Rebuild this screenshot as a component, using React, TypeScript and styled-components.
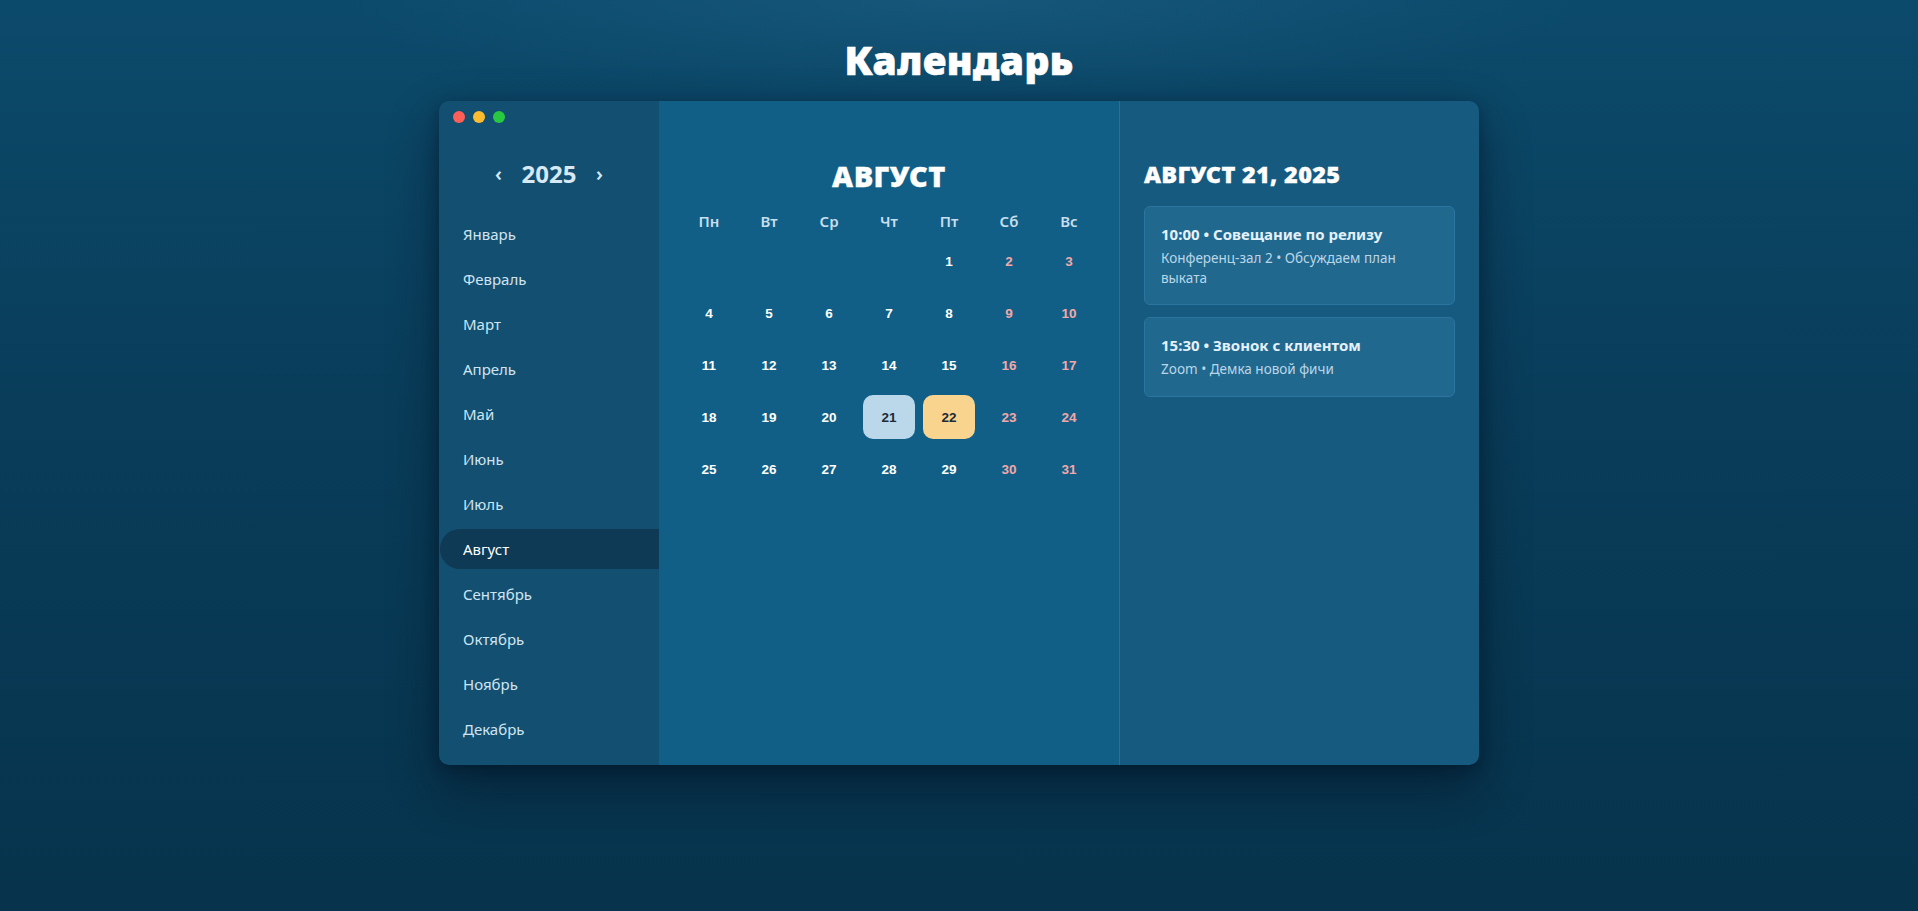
import React from "react";
import styled, { createGlobalStyle } from "styled-components";

const GlobalStyle = createGlobalStyle`
  html, body { margin: 0; padding: 0; }
  body {
    min-height: 911px;
    font-family: "Noto Sans", "Open Sans", sans-serif;
    background:
      radial-gradient(ellipse 900px 140px at 50% 0%, rgba(40, 110, 150, 0.35), rgba(0,0,0,0) 70%),
      linear-gradient(180deg, #0c4a6b 0%, #093d5a 45%, #07334c 100%);
    background-attachment: fixed;
  }
`;

const Page = styled.div`
  min-height: 911px;
  padding-top: 37px;
  box-sizing: border-box;
  display: flex;
  flex-direction: column;
  align-items: center;
`;

const Title = styled.h1`
  margin: 0 0 18px;
  font-size: 39px;
  line-height: 46px;
  font-weight: 900;
  color: #ffffff;
  letter-spacing: 0.4px;
  -webkit-text-stroke: 0.6px #ffffff;
`;

const Window = styled.div`
  width: 1040px;
  display: flex;
  border-radius: 10px;
  overflow: hidden;
  box-shadow: 0 22px 50px rgba(0, 10, 25, 0.45), 0 4px 14px rgba(0, 10, 25, 0.3);
`;

const Sidebar = styled.aside`
  width: 220px;
  flex: 0 0 220px;
  background: #134f71;
  padding: 10px 0 16px;
  box-sizing: border-box;
  display: flex;
  flex-direction: column;
`;

const Dots = styled.div`
  display: flex;
  gap: 8px;
  padding-left: 14px;
  margin-bottom: 35px;
`;

const Dot = styled.span<{ $color: string }>`
  width: 12px;
  height: 12px;
  border-radius: 50%;
  background: ${(p) => p.$color};
`;

const YearRow = styled.div`
  height: 32px;
  display: flex;
  align-items: center;
  justify-content: center;
  gap: 12px;
  margin-bottom: 24px;
  color: #d6e9f5;
`;

const Chevron = styled.button`
  background: none;
  border: none;
  padding: 0 2px;
  color: #d6e9f5;
  font-family: "Noto Sans", sans-serif;
  font-size: 20px;
  font-weight: 600;
  line-height: 32px;
  cursor: pointer;
`;

const Year = styled.span`
  font-size: 24px;
  font-weight: 700;
  line-height: 32px;
  width: 66px;
  text-align: center;
`;

const MonthList = styled.ul`
  list-style: none;
  margin: 0;
  padding: 0 0 0 1px;
  display: flex;
  flex-direction: column;
  gap: 5px;
`;

const MonthItem = styled.li<{ $active?: boolean }>`
  height: 40px;
  display: flex;
  align-items: center;
  padding-left: 23px;
  font-size: 15px;
  color: ${(p) => (p.$active ? "#ffffff" : "#cfe5f2")};
  background: ${(p) => (p.$active ? "#0f3a56" : "transparent")};
  border-radius: 20px 0 0 20px;
`;

const Main = styled.section`
  width: 460px;
  flex: 0 0 460px;
  background: #115f87;
  padding: 58px 20px 20px;
  box-sizing: border-box;
  display: flex;
  flex-direction: column;
  align-items: center;
`;

const MonthTitle = styled.h2`
  margin: 0 0 18px;
  font-size: 29px;
  line-height: 34px;
  font-weight: 900;
  color: #ffffff;
  text-transform: uppercase;
  letter-spacing: 0.5px;
  -webkit-text-stroke: 0.3px #ffffff;
`;

const Grid = styled.div`
  display: grid;
  grid-template-columns: repeat(7, 52px);
  column-gap: 8px;
  row-gap: 8px;
  grid-auto-rows: 44px;
  grid-template-rows: 20px;
`;

const WeekDay = styled.div`
  text-align: center;
  font-size: 15px;
  line-height: 20px;
  font-weight: 600;
  color: #c6deed;
`;

const Day = styled.button<{ $weekend?: boolean; $variant?: "selected" | "today" }>`
  border: none;
  border-radius: 10px;
  font-family: "Liberation Sans", Arial, sans-serif;
  font-size: 13.5px;
  font-weight: 700;
  padding: 0;
  cursor: pointer;
  color: ${(p) =>
    p.$variant ? "#1d2b36" : p.$weekend ? "#f2a8a8" : "#ffffff"};
  background: ${(p) =>
    p.$variant === "selected"
      ? "#bad8ea"
      : p.$variant === "today"
      ? "#f8d48f"
      : "transparent"};
`;

const Empty = styled.div``;

const Details = styled.section`
  flex: 1;
  background: #175a7f;
  border-left: 1px solid #2c6f95;
  padding: 60px 24px 24px;
  box-sizing: border-box;
  display: flex;
  flex-direction: column;
`;

const DetailsTitle = styled.h3`
  margin: 0 0 18px;
  font-size: 23.5px;
  line-height: 27px;
  font-weight: 900;
  color: #ffffff;
  text-transform: uppercase;
  letter-spacing: 0.3px;
  -webkit-text-stroke: 0.3px #ffffff;
`;

const Events = styled.div`
  display: flex;
  flex-direction: column;
  gap: 12px;
`;

const EventCard = styled.div`
  background: #21688f;
  border: 1px solid #2b75a0;
  border-radius: 6px;
  padding: 16px 16px 16px;
`;

const EventTitle = styled.div`
  font-size: 15px;
  line-height: 22px;
  font-weight: 700;
  color: #e3f1fa;
  margin-bottom: 4px;
`;

const EventMeta = styled.div`
  font-size: 13.5px;
  line-height: 19.5px;
  color: #b9d6e7;
`;

const months = [
  "Январь", "Февраль", "Март", "Апрель", "Май", "Июнь",
  "Июль", "Август", "Сентябрь", "Октябрь", "Ноябрь", "Декабрь",
];
const weekDays = ["Пн", "Вт", "Ср", "Чт", "Пт", "Сб", "Вс"];

const events = [
  { title: "10:00 • Совещание по релизу", meta: "Конференц-зал 2 • Обсуждаем план выката" },
  { title: "15:30 • Звонок с клиентом", meta: "Zoom • Демка новой фичи" },
];

export default function App() {
  const offset = 4; // Aug 1 2025 is Friday
  const cells: React.ReactNode[] = [];
  for (let i = 0; i < offset; i++) cells.push(<Empty key={`e${i}`} />);
  for (let d = 1; d <= 31; d++) {
    const col = (offset + d - 1) % 7;
    const weekend = col >= 5;
    const variant = d === 21 ? "selected" : d === 22 ? "today" : undefined;
    cells.push(
      <Day key={d} $weekend={weekend} $variant={variant}>
        {d}
      </Day>
    );
  }

  return (
    <>
      <GlobalStyle />
      <Page>
        <Title>Календарь</Title>
        <Window>
          <Sidebar>
            <Dots>
              <Dot $color="#ff5f57" />
              <Dot $color="#febc2e" />
              <Dot $color="#28c840" />
            </Dots>
            <YearRow>
              <Chevron>‹</Chevron>
              <Year>2025</Year>
              <Chevron>›</Chevron>
            </YearRow>
            <MonthList>
              {months.map((m) => (
                <MonthItem key={m} $active={m === "Август"}>
                  {m}
                </MonthItem>
              ))}
            </MonthList>
          </Sidebar>
          <Main>
            <MonthTitle>Август</MonthTitle>
            <Grid>
              {weekDays.map((w) => (
                <WeekDay key={w}>{w}</WeekDay>
              ))}
              {cells}
            </Grid>
          </Main>
          <Details>
            <DetailsTitle>Август 21, 2025</DetailsTitle>
            <Events>
              {events.map((e) => (
                <EventCard key={e.title}>
                  <EventTitle>{e.title}</EventTitle>
                  <EventMeta>{e.meta}</EventMeta>
                </EventCard>
              ))}
            </Events>
          </Details>
        </Window>
      </Page>
    </>
  );
}
